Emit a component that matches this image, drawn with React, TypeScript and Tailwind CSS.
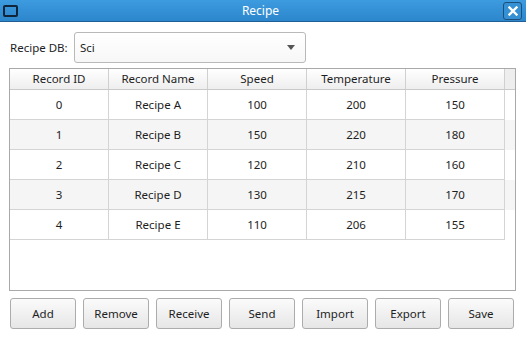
import React from "react";

const rows = [
  ["0", "Recipe A", "100", "200", "150"],
  ["1", "Recipe B", "150", "220", "180"],
  ["2", "Recipe C", "120", "210", "160"],
  ["3", "Recipe D", "130", "215", "170"],
  ["4", "Recipe E", "110", "206", "155"],
];
const headers = ["Record ID", "Record Name", "Speed", "Temperature", "Pressure"];
const buttons = ["Add", "Remove", "Receive", "Send", "Import", "Export", "Save"];

export default function App() {
  return (
    <div
      className="w-[526px] h-[337px] bg-white flex flex-col overflow-hidden text-[11.5px] text-[#1e1e1e]"
      style={{ fontFamily: '"Noto Sans", "Open Sans", sans-serif' }}
    >
      {/* Title bar */}
      <div className="h-[22px] flex items-center relative bg-gradient-to-b from-[#3d9be0] to-[#2c86cc] border-b border-[#1f5f95]">
        <div className="ml-[3px] w-[15px] h-[12px] border-2 border-[#10253a] rounded-[2px]" />
        <div className="flex-1 text-center text-white text-[12px] leading-none">Recipe</div>
        <div className="mr-[4px] w-[19px] h-[18px] rounded-[3px] border border-[#1d4f7a] bg-[#3690d4] flex items-center justify-center">
          <svg width="10" height="10" viewBox="0 0 10 10">
            <path d="M1.5 1.5 L8.5 8.5 M8.5 1.5 L1.5 8.5" stroke="white" strokeWidth="2.4" strokeLinecap="square" />
          </svg>
        </div>
      </div>

      {/* Combo row */}
      <div className="flex items-center mt-[10px] ml-[10px] h-[31px]">
        <span className="w-[64px]">Recipe DB:</span>
        <div className="w-[232px] h-[31px] border border-[#b9b9b9] rounded-[3px] bg-gradient-to-b from-white to-[#f7f7f7] flex items-center pl-[5px] pr-[10px]">
          <span className="flex-1">Sci</span>
          <svg width="8" height="5" viewBox="0 0 8 5">
            <path d="M0 0 L8 0 L4 5 Z" fill="#555" />
          </svg>
        </div>
      </div>

      {/* Table */}
      <div className="mt-[5px] ml-[9px] w-[507px] h-[223px] border border-[#a9a9a9] bg-white flex flex-col">
        <div className="flex h-[21px] bg-gradient-to-b from-white to-[#eeeeee] border-b border-[#c9c9c9]">
          {headers.map((h) => (
            <div
              key={h}
              className="w-[99px] flex items-center justify-center border-r border-[#d0d0d0]"
            >
              {h}
            </div>
          ))}
          <div className="flex-1 bg-[#eeeeee]" />
        </div>
        {rows.map((r, ri) => (
          <div key={ri} className={`flex h-[30px] ${ri % 2 === 1 ? "bg-[#f5f5f5]" : "bg-white"}`}>
            {r.map((c, ci) => (
              <div
                key={ci}
                className="w-[99px] flex items-center justify-center border-r border-b border-[#d4d4d4]"
              >
                {c}
              </div>
            ))}
          </div>
        ))}
      </div>

      {/* Buttons */}
      <div className="flex mt-[7px] ml-[10px] gap-[7px]">
        {buttons.map((b) => (
          <div
            key={b}
            className="w-[66px] h-[31px] border border-[#acacac] rounded-[3px] bg-gradient-to-b from-[#fbfbfb] to-[#e6e6e6] flex items-center justify-center"
          >
            {b}
          </div>
        ))}
      </div>
    </div>
  );
}
